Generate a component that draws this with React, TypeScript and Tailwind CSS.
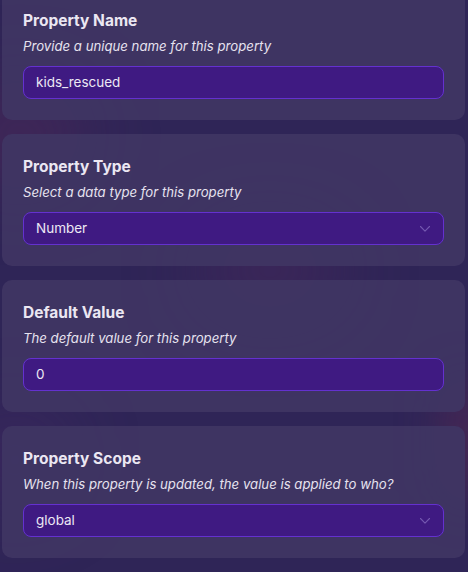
import React from "react";

const Chevron = () => (
  <svg width="12" height="8" viewBox="0 0 12 8" fill="none" className="shrink-0">
    <path d="M1.5 1.5L6 6.2L10.5 1.5" stroke="#7458b0" strokeWidth="1.1" strokeLinecap="round" strokeLinejoin="round" />
  </svg>
);

type CardProps = { title: string; subtitle: string; value: string; select?: boolean };

const Card = ({ title, subtitle, value, select }: CardProps) => (
  <div className="relative rounded-[10px] bg-[#3f3563]/95 px-[21px] pt-[21px] pb-[21px]">
    <div className="text-[15.5px] leading-6 font-bold text-[#ebe7f2]">{title}</div>
    <div className="mt-[3px] text-[13.2px] leading-5 italic text-[#e6e2ef]">{subtitle}</div>
    <div className="mt-[10px] flex h-[33px] items-center justify-between rounded-lg border border-[#6431cf] bg-[#3f1a82] pl-[12px] pr-[12px] text-[13.5px] text-[#ece8f4]">
      <span>{value}</span>
      {select && <Chevron />}
    </div>
  </div>
);

export default function App() {
  return (
    <div
      className="relative h-[572px] w-[468px] overflow-hidden bg-[#2f2557]"
      style={{ fontFamily: "Inter, 'Noto Sans', sans-serif" }}
    >
      <div className="pointer-events-none absolute inset-0">
        <div className="absolute left-[-40px] top-[90px] h-[90px] w-[120px] rounded-full bg-[#6b2a5a]/40 blur-2xl" />
        <div className="absolute left-[200px] top-[230px] h-[80px] w-[140px] rounded-full bg-[#5a2a60]/40 blur-2xl" />
        <div className="absolute right-[-20px] top-[380px] h-[120px] w-[40px] rounded-full bg-[#6b2a50]/50 blur-xl" />
        <div className="absolute left-[-30px] top-[420px] h-[80px] w-[90px] rounded-full bg-[#5a3070]/40 blur-2xl" />
      </div>
      <div className="relative -mt-[12px] flex flex-col gap-[14px] pl-[2px] pr-[3px]">
        <Card title="Property Name" subtitle="Provide a unique name for this property" value="kids_rescued" />
        <Card title="Property Type" subtitle="Select a data type for this property" value="Number" select />
        <Card title="Default Value" subtitle="The default value for this property" value="0" />
        <Card
          title="Property Scope"
          subtitle="When this property is updated, the value is applied to who?"
          value="global"
          select
        />
      </div>
    </div>
  );
}
